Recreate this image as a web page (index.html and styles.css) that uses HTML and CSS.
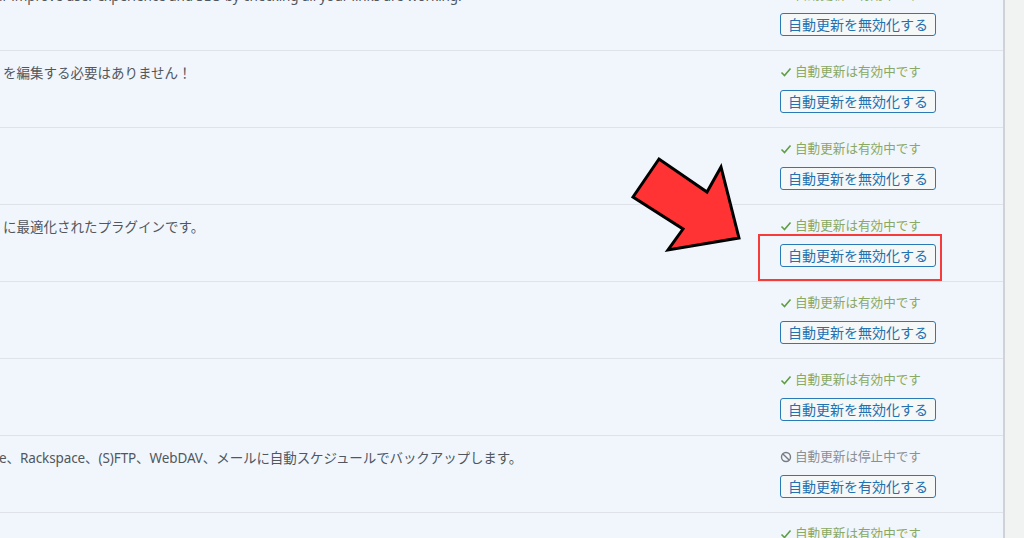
FILE: index.html
```html
<!DOCTYPE html>
<html lang="ja">
<head>
    <meta charset="UTF-8">
    <meta name="viewport" content="width=device-width, initial-scale=1.0">
    <title>プラグイン</title>
    <link rel="stylesheet" href="styles.css">
</head>
<body>

    <div class="plugin-table">
        <div class="plugin-row">
            <div class="plugin-desc"><span class="cut">ir improve user experience and SEO by checking all your links are working.</span></div>
            <div class="auto-update">
                <div class="status on"><svg class="icon" viewBox="0 0 12 12"><path d="M1.5 6.5 L4.5 9.5 L10.5 2.5"/></svg>自動更新は有効中です</div>
                <button class="toggle">自動更新を無効化する</button>
            </div>
        </div>
        <div class="plugin-row">
            <div class="plugin-desc">を編集する必要はありません！</div>
            <div class="auto-update">
                <div class="status on"><svg class="icon" viewBox="0 0 12 12"><path d="M1.5 6.5 L4.5 9.5 L10.5 2.5"/></svg>自動更新は有効中です</div>
                <button class="toggle">自動更新を無効化する</button>
            </div>
        </div>
        <div class="plugin-row">
            <div class="plugin-desc"></div>
            <div class="auto-update">
                <div class="status on"><svg class="icon" viewBox="0 0 12 12"><path d="M1.5 6.5 L4.5 9.5 L10.5 2.5"/></svg>自動更新は有効中です</div>
                <button class="toggle">自動更新を無効化する</button>
            </div>
        </div>
        <div class="plugin-row">
            <div class="plugin-desc">に最適化されたプラグインです。</div>
            <div class="auto-update">
                <div class="status on"><svg class="icon" viewBox="0 0 12 12"><path d="M1.5 6.5 L4.5 9.5 L10.5 2.5"/></svg>自動更新は有効中です</div>
                <button class="toggle">自動更新を無効化する</button>
            </div>
        </div>
        <div class="plugin-row">
            <div class="plugin-desc"></div>
            <div class="auto-update">
                <div class="status on"><svg class="icon" viewBox="0 0 12 12"><path d="M1.5 6.5 L4.5 9.5 L10.5 2.5"/></svg>自動更新は有効中です</div>
                <button class="toggle">自動更新を無効化する</button>
            </div>
        </div>
        <div class="plugin-row">
            <div class="plugin-desc"></div>
            <div class="auto-update">
                <div class="status on"><svg class="icon" viewBox="0 0 12 12"><path d="M1.5 6.5 L4.5 9.5 L10.5 2.5"/></svg>自動更新は有効中です</div>
                <button class="toggle">自動更新を無効化する</button>
            </div>
        </div>
        <div class="plugin-row">
            <div class="plugin-desc"><span class="cut">e、Rackspace、(S)FTP、WebDAV、メールに自動スケジュールでバックアップします。</span></div>
            <div class="auto-update">
                <div class="status off"><svg class="icon" viewBox="0 0 12 12"><circle cx="6" cy="6" r="4.5"/><path d="M2.9 2.9 L9.1 9.1"/></svg>自動更新は停止中です</div>
                <button class="toggle">自動更新を有効化する</button>
            </div>
        </div>
        <div class="plugin-row">
            <div class="plugin-desc"></div>
            <div class="auto-update">
                <div class="status on"><svg class="icon" viewBox="0 0 12 12"><path d="M1.5 6.5 L4.5 9.5 L10.5 2.5"/></svg>自動更新は有効中です</div>
                <button class="toggle">自動更新を無効化する</button>
            </div>
        </div>
    </div>

    <!-- annotation -->
    <div class="highlight"></div>
    <svg class="arrow" width="120" height="100" viewBox="626 154 120 100">
        <polygon points="633,197 659,159 707,192 721,167 739,238 668,250 683,229"/>
    </svg>

</body>
</html>
```

FILE: styles.css
```css
body {
    font-family: "Noto Sans", "Noto Sans CJK JP", sans-serif;
    margin: 0;
    padding: 0;
    background-color: #f1f2f2;
    color: #50575e;
    overflow: hidden;
    height: 538px;
    position: relative;
}

.plugin-table {
    width: 1003px;
    margin-top: -27px;
    border-right: 2px solid #cfd2d8;
    background-color: #f0f6fc;
}

.plugin-row {
    display: flex;
    height: 77px;
    box-sizing: border-box;
    border-top: 1px solid #dfe3e9;
    padding-top: 12px;
}

.plugin-row:first-child {
    border-top: none;
    padding-top: 13px;
}

.plugin-desc {
    flex: 1;
    font-size: 13.5px;
    line-height: 20px;
    color: #50575e;
    white-space: nowrap;
    overflow: hidden;
    padding-left: 3px;
}

.cut {
    margin-left: -4px;
    letter-spacing: -0.1px;
}

.auto-update {
    width: 223px;
    display: flex;
    flex-direction: column;
    align-items: flex-start;
    gap: 9px;
}

.status {
    display: flex;
    align-items: center;
    font-size: 12.6px;
    line-height: 18px;
    white-space: nowrap;
}

.status .icon {
    width: 12px;
    height: 12px;
    margin-right: 3px;
    fill: none;
    stroke-width: 1.6;
}

.status.on {
    color: #8aa862;
}

.status.on .icon {
    stroke: #5f9e45;
}

.status.off {
    color: #8c8f94;
}

.status.off .icon {
    stroke: #787c82;
    stroke-width: 1.4;
}

.toggle {
    font-family: "Noto Sans CJK JP", sans-serif;
    font-size: 14px;
    line-height: 21px;
    height: 23px;
    padding: 0 7px;
    color: #2271b1;
    background-color: #f6f7f7;
    border: 1px solid #2a7ab8;
    border-radius: 3px;
    cursor: pointer;
}

.highlight {
    position: absolute;
    left: 758px;
    top: 234px;
    width: 180px;
    height: 43px;
    border: 2px solid #f63b3b;
}

.arrow {
    position: absolute;
    left: 626px;
    top: 154px;
}

.arrow polygon {
    fill: #ff3333;
    stroke: #000;
    stroke-width: 3;
    stroke-linejoin: miter;
}
```
